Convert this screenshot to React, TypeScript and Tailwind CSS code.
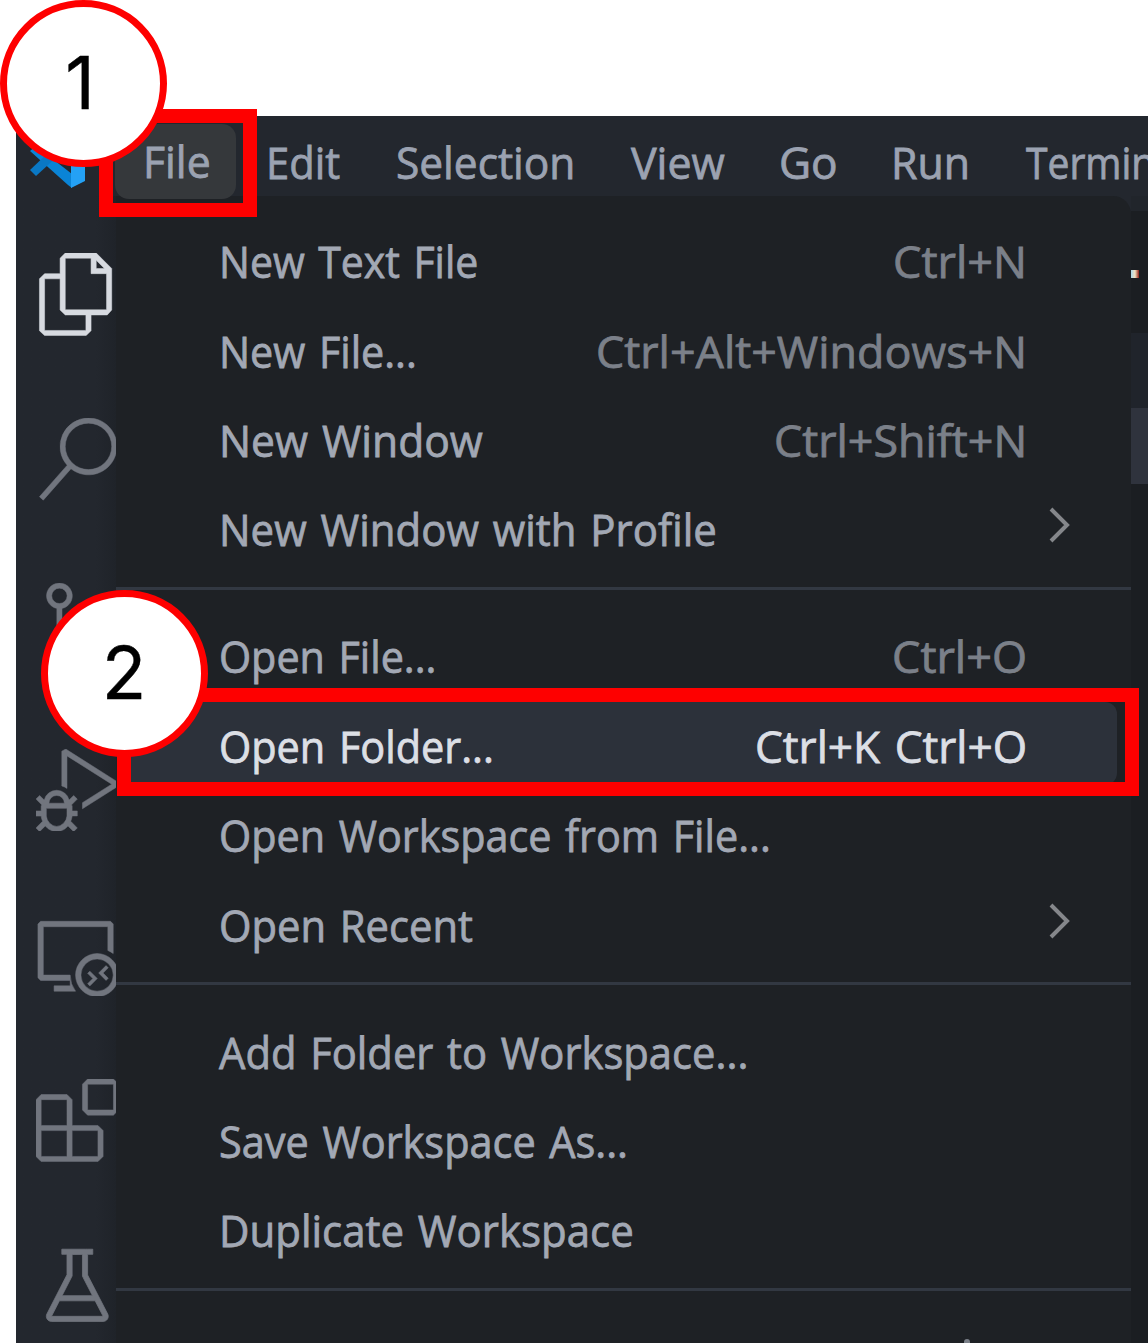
import { useLayoutEffect, useRef, useState } from "react";
import type { ReactNode } from "react";
import {
  VscFiles,
  VscSearch,
  VscSourceControl,
  VscDebugAlt,
  VscRemoteExplorer,
  VscExtensions,
  VscBeaker,
} from "react-icons/vsc";

/** Text condensed or widened horizontally to occupy exactly `width` pixels. */
function Fit({ width, children }: { width: number; children: ReactNode }) {
  const ref = useRef<HTMLSpanElement>(null);
  const [scale, setScale] = useState(1);
  useLayoutEffect(() => {
    if (ref.current) setScale(width / ref.current.offsetWidth);
  }, [width]);
  return (
    <span className="block shrink-0" style={{ width }}>
      <span
        ref={ref}
        className="inline-block origin-left whitespace-nowrap"
        style={{ transform: `scaleX(${scale})` }}
      >
        {children}
      </span>
    </span>
  );
}

type Entry = {
  label: string;
  w: number;
  keys?: string;
  kw?: number;
  sub?: boolean;
  active?: boolean;
};

const groups: Entry[][] = [
  [
    { label: "New Text File", w: 259, keys: "Ctrl+N", kw: 134 },
    { label: "New File...", w: 198, keys: "Ctrl+Alt+Windows+N", kw: 431 },
    { label: "New Window", w: 264, keys: "Ctrl+Shift+N", kw: 253 },
    { label: "New Window with Profile", w: 498, sub: true },
  ],
  [
    { label: "Open File...", w: 217, keys: "Ctrl+O", kw: 135 },
    { label: "Open Folder...", w: 275, keys: "Ctrl+K Ctrl+O", kw: 272, active: true },
    { label: "Open Workspace from File...", w: 552 },
    { label: "Open Recent", w: 254, sub: true },
  ],
  [
    { label: "Add Folder to Workspace...", w: 529 },
    { label: "Save Workspace As...", w: 409 },
    { label: "Duplicate Workspace", w: 415 },
  ],
];

function Chevron() {
  return (
    <svg width="24" height="38" viewBox="0 0 24 38" fill="none" className="-mt-2.5">
      <path d="M3 3 L19 19 L3 35" stroke="#85878b" strokeWidth="4" />
    </svg>
  );
}

function Row({ e }: { e: Entry }) {
  return (
    <div
      className={
        "flex h-[89.4px] items-center pl-[102.5px] " +
        (e.active ? "text-[#dcdfe5]" : "text-[#a2a8b4]")
      }
    >
      <Fit width={e.w}>{e.label}</Fit>
      {e.keys && e.kw && (
        <div className={"mr-[104.5px] ml-auto " + (e.active ? "" : "text-[#7b8089]")}>
          <Fit width={e.kw}>{e.keys}</Fit>
        </div>
      )}
      {e.sub && (
        <div className="mr-[59px] ml-auto">
          <Chevron />
        </div>
      )}
    </div>
  );
}

function Logo() {
  return (
    <svg width="56" height="60" viewBox="0 0 56 60">
      <path d="M0 23 L6 18 L42 46 V60 L38 57 Z" fill="#0a84d6" />
      <path d="M0 42 L6 48 L42 15 L42 2 Z" fill="#0a78c4" />
      <path d="M41 0 L55 7 V53 L41 60 Z" fill="#24a1f5" />
    </svg>
  );
}

const menus: { label: string; w: number; gap: string }[] = [
  { label: "Edit", w: 74, gap: "ml-0" },
  { label: "Selection", w: 179, gap: "ml-[56px]" },
  { label: "View", w: 94, gap: "ml-[56px]" },
  { label: "Go", w: 59, gap: "ml-[54px]" },
  { label: "Run", w: 79, gap: "ml-[53px]" },
  { label: "Terminal", w: 161, gap: "ml-[56px]" },
];

function Step({ n, place, nudge }: { n: string; place: string; nudge: string }) {
  return (
    <div
      className={
        "absolute z-20 flex size-[167px] items-center justify-center rounded-full border-[7px] border-[#fe0000] bg-white text-[73px] leading-none text-black [-webkit-text-stroke:0.4px] [font-family:Inter,sans-serif] " +
        place
      }
    >
      <span className={nudge}>{n}</span>
    </div>
  );
}

export default function App() {
  return (
    <div className="relative h-[1343px] w-[1148px] overflow-hidden bg-white pt-[116px] pl-4 text-[43.4px] leading-[60px] [word-spacing:3px] [-webkit-text-stroke:0.8px] [font-family:'Open_Sans','Noto_Sans',sans-serif]">
      <div className="flex h-[1227px] flex-col overflow-hidden bg-[#23272e]">
        <header className="relative z-10 flex h-20 shrink-0 items-start text-[#9ba2b1]">
          <div className="mt-[12px] ml-[14px] w-[85px] shrink-0">
            <Logo />
          </div>
          <div className="mt-[8px] flex h-[75px] w-[121px] shrink-0 items-center rounded-[14px] bg-[#35383b] pl-[28px]">
            <Fit width={68}>File</Fit>
          </div>
          <div className="ml-[30px] flex h-[93px] shrink-0 items-center">
            {menus.map((m) => (
              <div key={m.label} className={m.gap}>
                <Fit width={m.w}>{m.label}</Fit>
              </div>
            ))}
          </div>
        </header>

        <div className="flex min-h-0 grow">
          <nav className="flex w-[100px] shrink-0 flex-col gap-[82.6px] overflow-hidden bg-gradient-to-r from-[#23272e] from-80% to-[#1f2329] pt-[57px] pl-5 text-[#71757e] [&>svg]:size-[82.6px] [&>svg]:shrink-0 [&>svg]:stroke-[0.15px]">
            <VscFiles className="text-[#d7dae0]" />
            <VscSearch />
            <VscSourceControl />
            <VscDebugAlt />
            <VscRemoteExplorer />
            <VscExtensions />
            <VscBeaker />
          </nav>

          <main className="w-[1015px] shrink-0 rounded-tr-[18px] bg-[#1e2125] pt-[21.5px]">
            {groups.map((g, i) => (
              <section key={i}>
                {g.map((e) => (
                  <div key={e.label} className={e.active ? "relative" : ""}>
                    {e.active && (
                      <div className="absolute top-0 right-[14px] left-[10px] h-[83px] rounded-[12px] bg-[#2c313a]" />
                    )}
                    <div className={e.active ? "relative" : ""}>
                      <Row e={e} />
                    </div>
                  </div>
                ))}
                <div className="flex h-[37.6px] items-start pt-[11.8px]">
                  <div className="h-[3px] w-full bg-[#323842]" />
                </div>
              </section>
            ))}
            <div className="pt-[25px] pl-[848px]">
              <div className="h-3 w-[6px] rounded-full bg-[#7b8089]" />
            </div>
          </main>

          <aside className="flex grow flex-col bg-[#1b1e22]">
            <div className="h-[15px] bg-[#21252b]" />
            <div className="h-[122px] pt-[59px]">
              <div className="h-2 w-2 bg-gradient-to-r from-[#a8d5e8] via-[#f0e0c0] to-[#8b1a1a]" />
            </div>
            <div className="h-[75px] bg-[#20242b]" />
            <div className="h-[76px] bg-[#2f333d]" />
          </aside>
        </div>
      </div>

      <div className="absolute top-[109px] left-[99px] z-10 h-[108px] w-[158px] border-[14px] border-[#fe0000]" />
      <div className="absolute top-[688px] left-[117px] z-10 h-[108px] w-[1022px] border-[14px] border-[#fe0000]" />
      <Step n="1" place="top-0 left-0" nudge="mr-[7px] mb-[3px]" />
      <Step n="2" place="top-[590px] left-[41px]" nudge="mr-[1px] mb-[3px]" />
    </div>
  );
}
